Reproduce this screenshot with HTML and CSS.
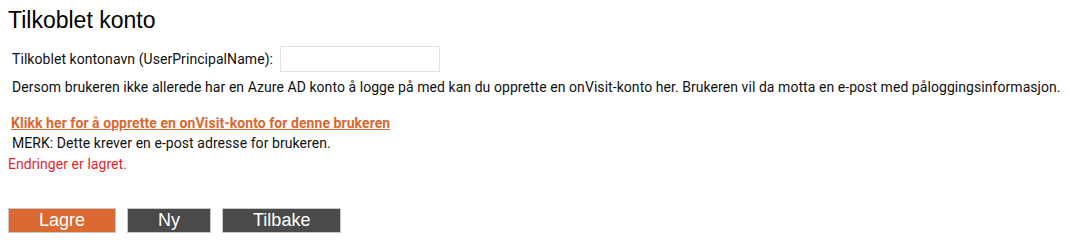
FILE: index.html
```html
<!DOCTYPE html>
<html lang="no">
<head>
<meta charset="utf-8">
<title>Tilkoblet konto</title>
<link rel="stylesheet" href="styles.css">
</head>
<body>
<h1 class="title">Tilkoblet konto</h1>
<div class="content">
  <div class="field-row">
    <label class="field-label" for="upn">Tilkoblet kontonavn (UserPrincipalName):</label>
    <input class="field-input" id="upn" type="text">
  </div>
  <p class="info">Dersom brukeren ikke allerede har en Azure AD konto å logge på med kan du opprette en onVisit-konto her. Brukeren vil da motta en e-post med påloggingsinformasjon.</p>
  <a class="create-link" href="#">Klikk her for å opprette en onVisit-konto for denne brukeren</a>
  <p class="note">MERK: Dette krever en e-post adresse for brukeren.</p>
</div>
<p class="status">Endringer er lagret.</p>
<div class="actions">
  <button class="btn btn-primary" type="button">Lagre</button>
  <button class="btn btn-dark" type="button">Ny</button>
  <button class="btn btn-dark" type="button">Tilbake</button>
</div>
</body>
</html>
```

FILE: styles.css
```css
html, body {
  background: #ffffff;
}

body {
  margin: 8px;
  font-family: Roboto, "Liberation Sans", Arial, sans-serif;
  font-size: 14px;
  line-height: 20px;
  letter-spacing: 0.06px;
  color: #111111;
}

.title {
  margin: 0;
  font-family: "Liberation Sans", Arial, sans-serif;
  font-size: 23px;
  font-weight: normal;
  line-height: 24px;
  letter-spacing: 0;
  color: #000000;
}

.content {
  padding-left: 4px;
}

.field-row {
  display: flex;
  align-items: center;
  margin-top: 14px;
}

.field-label {
  margin-right: 7px;
}

.field-input {
  box-sizing: border-box;
  width: 160px;
  height: 26px;
  margin: 0;
  padding: 2px 6px;
  border: 1px solid #e2e2e2;
  background: #ffffff;
  font: inherit;
  outline: none;
}

.info {
  margin: 5px 0 0 0;
  white-space: nowrap;
}

.create-link {
  display: block;
  margin-top: 16px;
  margin-left: -1px;
  color: #d9682f;
  font-weight: bold;
  text-decoration: underline;
}

.note {
  margin: 0;
}

.status {
  margin: 1px 0 0 0;
  color: #e8262a;
}

.actions {
  display: flex;
  gap: 11px;
  margin-top: 34px;
}

.btn {
  box-sizing: border-box;
  height: 25px;
  margin: 0;
  padding: 0 30px;
  border: 1px solid #c8c8c8;
  font-family: "Liberation Sans", Arial, sans-serif;
  font-size: 18px;
  line-height: 23px;
  letter-spacing: 0;
  color: #ffffff;
  cursor: pointer;
}

.btn-primary {
  background: #da6a31;
}

.btn-dark {
  background: #4a4a4a;
}
```
